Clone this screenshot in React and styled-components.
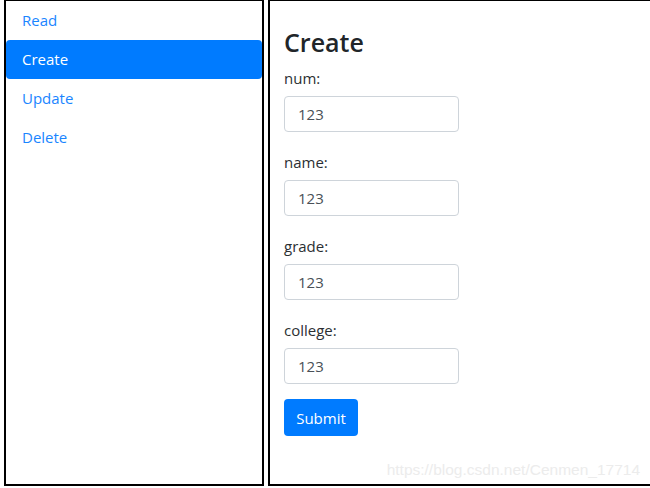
import React from "react";
import styled, { createGlobalStyle } from "styled-components";

const Global = createGlobalStyle`
  html, body { margin: 0; padding: 0; background: #fff; }
  body { font-family: "Open Sans", "Noto Sans", sans-serif; color: #212529; }
  * { box-sizing: border-box; }
`;

const Page = styled.div`
  position: relative;
  display: flex;
  gap: 4px;
  padding: 0 0 2px 4px;
  width: 650px;
  height: 488px;
  overflow: hidden;
`;

const Panel = styled.div`
  flex: none;
  width: ${(p) => p.$w}px;
  height: 486px;
  border: 2px solid #000;
  border-top-width: 1px;
  background: #fff;
`;

const Nav = styled.nav`
  display: flex;
  flex-direction: column;
`;

const NavItem = styled.a`
  display: block;
  height: 39px;
  padding: 0 16px;
  line-height: 39px;
  font-size: 15px;
  border-radius: 4px;
  color: ${(p) => (p.$active ? "#fff" : "#1a85ff")};
  background: ${(p) => (p.$active ? "#007bff" : "transparent")};
  text-decoration: none;
`;

const Content = styled.div`
  padding: 24px 14px 0 14px;
`;

const Title = styled.h2`
  margin: 0 0 7px;
  font-size: 25px;
  font-weight: 600;
  line-height: 34px;
  color: #212529;
`;

const Group = styled.div`
  display: flex;
  flex-direction: column;
  align-items: flex-start;
  margin-bottom: 18px;
  &:last-of-type { margin-bottom: 15px; }
`;

const Label = styled.label`
  font-size: 15px;
  line-height: 24px;
  margin-bottom: 6px;
  color: #2b2f33;
`;

const Input = styled.input`
  width: 175px;
  height: 36px;
  padding: 0 13px;
  font-family: inherit;
  font-size: 15px;
  color: #495057;
  border: 1px solid #ced4da;
  border-radius: 4px;
  outline: none;
`;

const Button = styled.button`
  width: 74px;
  height: 37px;
  padding: 0;
  font-family: inherit;
  font-size: 15px;
  color: #fff;
  background: #007bff;
  border: none;
  border-radius: 4px;
`;

const Watermark = styled.div`
  position: absolute;
  right: 10px;
  bottom: 9px;
  font-family: "Liberation Sans", Arial, sans-serif;
  font-size: 15.5px;
  color: #ececec;
  pointer-events: none;
`;

const items = ["Read", "Create", "Update", "Delete"];
const fields = ["num", "name", "grade", "college"];

export default function App() {
  return (
    <>
      <Global />
      <Page>
        <Panel $w={260}>
          <Nav>
            {items.map((it) => (
              <NavItem key={it} $active={it === "Create"}>
                {it}
              </NavItem>
            ))}
          </Nav>
        </Panel>
        <Panel $w={400}>
          <Content>
            <Title>Create</Title>
            {fields.map((f) => (
              <Group key={f}>
                <Label>{f}:</Label>
                <Input defaultValue="123" />
              </Group>
            ))}
            <Button>Submit</Button>
          </Content>
        </Panel>
        <Watermark>https://blog.csdn.net/Cenmen_17714</Watermark>
      </Page>
    </>
  );
}
